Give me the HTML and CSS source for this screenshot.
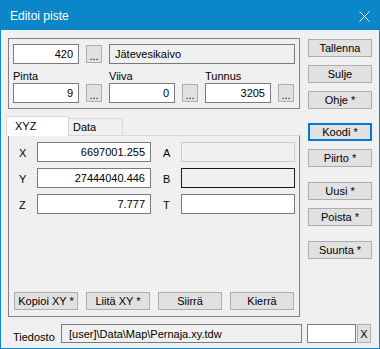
FILE: index.html
```html
<!DOCTYPE html>
<html lang="fi">

<head>
    <meta charset="UTF-8">
    <meta name="viewport" content="width=device-width, initial-scale=1.0">
    <title>Editoi piste</title>
    <link rel="stylesheet" href="styles.css">
</head>

<body>
    <div class="window">
        <!-- TITLE BAR -->
        <div class="titlebar">
            <span class="title">Editoi piste</span>
            <svg class="close" width="11" height="11" viewBox="0 0 11 11">
                <path d="M0.5 0.5 L10.5 10.5 M10.5 0.5 L0.5 10.5" stroke="#fff" stroke-width="1" fill="none" />
            </svg>
        </div>

        <div class="content">
            <div class="main">
                <div class="left">
                    <!-- POINT INFO -->
                    <div class="group">
                        <div class="row">
                            <input class="field num" type="text" value="420" readonly />
                            <button class="dots">...</button>
                            <input class="field name disabled" type="text" value="Jätevesikaivo" readonly />
                        </div>
                        <div class="row">
                            <div class="col">
                                <label>Pinta</label>
                                <div class="pair">
                                    <input class="field num" type="text" value="9" readonly />
                                    <button class="dots">...</button>
                                </div>
                            </div>
                            <div class="col">
                                <label>Viiva</label>
                                <div class="pair">
                                    <input class="field num" type="text" value="0" readonly />
                                    <button class="dots">...</button>
                                </div>
                            </div>
                            <div class="col">
                                <label>Tunnus</label>
                                <div class="pair">
                                    <input class="field num" type="text" value="3205" readonly />
                                    <button class="dots">...</button>
                                </div>
                            </div>
                        </div>
                    </div>

                    <!-- TABS -->
                    <div class="tabstrip">
                        <div class="tab active">XYZ</div>
                        <div class="tab">Data</div>
                    </div>
                    <div class="panel">
                        <div class="coords">
                            <span class="lbl">X</span>
                            <input class="field coord" type="text" value="6697001.255" readonly />
                            <span class="lbl lbl2">A</span>
                            <input class="field coord disabled soft" type="text" value="" readonly />

                            <span class="lbl">Y</span>
                            <input class="field coord" type="text" value="27444040.446" readonly />
                            <span class="lbl lbl2">B</span>
                            <input class="field coord disabled dark" type="text" value="" readonly />

                            <span class="lbl">Z</span>
                            <input class="field coord" type="text" value="7.777" readonly />
                            <span class="lbl lbl2">T</span>
                            <input class="field coord" type="text" value="" readonly />
                        </div>
                        <div class="actions">
                            <button class="btn">Kopioi XY *</button>
                            <button class="btn">Liitä XY *</button>
                            <button class="btn">Siirrä</button>
                            <button class="btn">Kierrä</button>
                        </div>
                    </div>
                </div>

                <!-- SIDE BUTTONS -->
                <div class="side">
                    <button class="btn">Tallenna</button>
                    <button class="btn">Sulje</button>
                    <button class="btn">Ohje *</button>
                    <button class="btn default sep">Koodi *</button>
                    <button class="btn">Piirto *</button>
                    <button class="btn sep">Uusi *</button>
                    <button class="btn">Poista *</button>
                    <button class="btn sep">Suunta *</button>
                </div>
            </div>

            <!-- FILE -->
            <div class="filerow">
                <span class="filelabel">Tiedosto</span>
                <input class="field path disabled" type="text" value="[user]\Data\Map\Pernaja.xy.tdw" readonly />
                <input class="field small" type="text" value="" readonly />
                <button class="btn xbtn">X</button>
            </div>
        </div>
    </div>
</body>

</html>
```

FILE: styles.css
```css
* {
    margin: 0;
    padding: 0;
    box-sizing: border-box;
    font-family: 'Liberation Sans', Arial, sans-serif;
}

body {
    width: 380px;
    height: 349px;
    overflow: hidden;
    background-color: #f0f0f0;
}

.window {
    width: 380px;
    height: 349px;
    border: 1px solid #0b86c8;
    display: flex;
    flex-direction: column;
}

.titlebar {
    height: 29px;
    flex-shrink: 0;
    background-color: #0b86c8;
    display: flex;
    align-items: center;
    justify-content: space-between;
    padding: 0 9px 0 9px;
}

.title {
    color: #fff;
    font-size: 12px;
}

.close {
    display: block;
    margin-top: 1px;
}

.content {
    flex: 1;
    background-color: #f0f0f0;
    padding: 0 7px;
    font-size: 11px;
    color: #000;
}

.main {
    display: flex;
    gap: 8px;
}

.left {
    width: 292px;
    margin-top: 8px;
}

/* inputs and buttons */
.field {
    display: block;
    height: 20px;
    border: 1px solid #7a7a7a;
    background-color: #fff;
    padding: 0 5px;
    font-size: 11px;
    color: #000;
    outline: none;
}

.field.disabled {
    background-color: #f0f0f0;
}

.field.soft {
    border-color: #cccccc;
}

.field.dark {
    border-color: #1a1a1a;
}

.num,
.coord {
    text-align: right;
}

.btn,
.dots {
    display: block;
    background-color: #e1e1e1;
    border: 1px solid #adadad;
    font-size: 11px;
    color: #000;
    padding: 0;
}

.btn {
    width: 64px;
    height: 18px;
}

.dots {
    width: 16px;
    height: 18px;
    line-height: 20px;
}

/* point group */
.group {
    border: 1px solid #828282;
    padding: 5px 4px 5px 4px;
}

.row {
    display: flex;
    align-items: center;
    gap: 7px;
}

.num {
    width: 66px;
}

.name {
    width: 186px;
}

.col label {
    display: block;
    height: 13px;
    line-height: 13px;
    margin-top: 6px;
}

.pair {
    display: flex;
    align-items: center;
    gap: 7px;
}

/* tabs */
.tabstrip {
    display: flex;
    align-items: flex-end;
    margin-top: 7px;
    margin-left: -2px;
    height: 19px;
}

.tab {
    height: 17px;
    width: 54px;
    border: 1px solid #d9d9d9;
    border-left: none;
    border-bottom: none;
    padding: 2px 0 0 4px;
}

.tab.active {
    height: 20px;
    width: 63px;
    background-color: #fff;
    border-left: 1px solid #d9d9d9;
    margin-bottom: -1px;
    padding: 3px 0 0 8px;
    position: relative;
}

.panel {
    height: 182px;
    border: 1px solid #828282;
    border-top-color: #d9d9d9;
    display: flex;
    flex-direction: column;
    padding: 6px 0 6px 0;
}

.coords {
    display: grid;
    grid-template-columns: 18px 114px 30px 114px;
    row-gap: 6px;
    padding-left: 10px;
}

.lbl {
    padding-top: 5px;
}

.lbl2 {
    padding-left: 12px;
}

.coord {
    width: 114px;
}

.actions {
    margin-top: auto;
    display: flex;
    gap: 8px;
    padding-left: 5px;
}

/* side buttons */
.side {
    width: 64px;
    padding-top: 9px;
    display: flex;
    flex-direction: column;
    gap: 8px;
}

.side .sep {
    margin-top: 6px;
}

.side .btn:nth-child(6),
.side .btn:nth-child(8) {
    margin-top: 7px;
}

.btn.default {
    border: 2px solid #0078d7;
}

/* file row */
.filerow {
    display: flex;
    align-items: flex-end;
    margin-top: 7px;
}

.filelabel {
    width: 48px;
    margin-left: 5px;
    font-size: 11px;
    line-height: 12px;
}

.path {
    width: 241px;
    height: 19px;
    padding-left: 7px;
}

.small {
    width: 49px;
    height: 19px;
    margin-left: 5px;
}

.xbtn {
    width: 14px;
    height: 19px;
    margin-left: 1px;
}
```
